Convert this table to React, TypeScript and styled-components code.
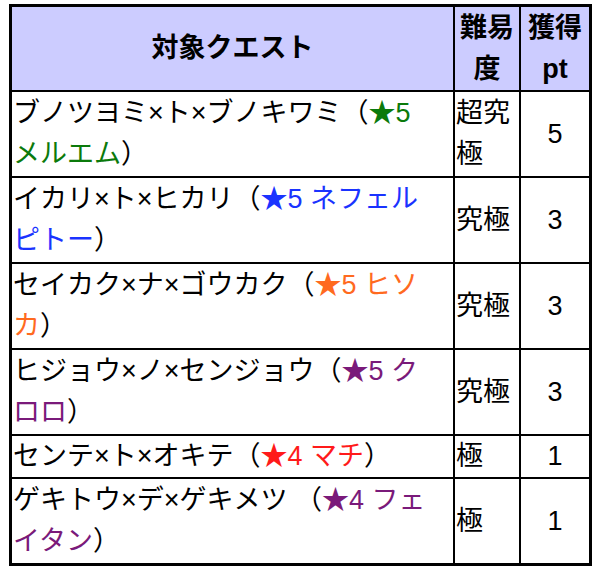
import React from "react";
import styled, { createGlobalStyle } from "styled-components";

const Global = createGlobalStyle`
  html, body { margin: 0; padding: 0; background: #ffffff; }
  body {
    font-family: "Liberation Sans", "Noto Sans CJK JP", sans-serif;
    color: #000;
  }
`;

const Page = styled.div`
  padding: 4px 0 0 9px;
`;

const Table = styled.table`
  width: 580px;
  box-sizing: border-box;
  table-layout: fixed;
  border-collapse: separate;
  border-spacing: 0;
  border: 3px solid #000;
  font-size: 27px;
  line-height: 41px;
`;

const Head = styled.th<{ $first?: boolean; $w: number }>`
  box-sizing: border-box;
  width: ${(p) => p.$w}px;
  height: 83px;
  background: #ccccff;
  font-weight: bold;
  text-align: center;
  vertical-align: middle;
  padding: 0;
  border-left: ${(p) => (p.$first ? "0" : "2px solid #000")};
`;

const Cell = styled.td<{ $first?: boolean; $center?: boolean; $tall?: boolean }>`
  box-sizing: border-box;
  height: ${(p) => (p.$tall ? 86 : 43)}px;
  border-top: 2px solid #000;
  border-left: ${(p) => (p.$first ? "0" : "2px solid #000")};
  padding: 0 1px;
  text-align: ${(p) => (p.$center ? "center" : "left")};
  vertical-align: middle;
  word-break: break-all;
`;

const Chara = styled.span<{ $color: string }>`
  color: ${(p) => p.$color};
`;

type Row = {
  first: string;
  star: string;
  color: string;
  line1: string;
  line2?: string;
  diff: React.ReactNode;
  pt: string;
  tall: boolean;
};

const rows: Row[] = [
  { first: "ブノツヨミ×ト×ブノキワミ（", star: "★5", color: "#0b7a0b", line1: "", line2: "メルエム", diff: <>超究<br />極</>, pt: "5", tall: true },
  { first: "イカリ×ト×ヒカリ（", star: "★5", color: "#1a33ff", line1: " ネフェル", line2: "ピトー", diff: "究極", pt: "3", tall: true },
  { first: "セイカク×ナ×ゴウカク（", star: "★5", color: "#ff6a1f", line1: " ヒソ", line2: "カ", diff: "究極", pt: "3", tall: true },
  { first: "ヒジョウ×ノ×センジョウ（", star: "★5", color: "#7a1a7a", line1: " ク", line2: "ロロ", diff: "究極", pt: "3", tall: true },
  { first: "センテ×ト×オキテ（", star: "★4", color: "#ff1a1a", line1: " マチ", diff: "極", pt: "1", tall: false },
  { first: "ゲキトウ×デ×ゲキメツ （", star: "★4", color: "#7a1a7a", line1: " フェ", line2: "イタン", diff: "極", pt: "1", tall: true },
];

export default function App() {
  return (
    <>
      <Global />
      <Page>
        <Table>
          <thead>
            <tr>
              <Head $first $w={441}>対象クエスト</Head>
              <Head $w={66}>難易<br />度</Head>
              <Head $w={70}>獲得<br />pt</Head>
            </tr>
          </thead>
          <tbody>
            {rows.map((r, i) => (
              <tr key={i}>
                <Cell $first $tall={r.tall}>
                  {r.first}
                  <Chara $color={r.color}>
                    {r.star}
                    {r.line1}
                  </Chara>
                  {r.line2 !== undefined ? (
                    <>
                      <br />
                      <Chara $color={r.color}>{r.line2}</Chara>）
                    </>
                  ) : (
                    "）"
                  )}
                </Cell>
                <Cell $tall={r.tall}>{r.diff}</Cell>
                <Cell $center $tall={r.tall}>{r.pt}</Cell>
              </tr>
            ))}
          </tbody>
        </Table>
      </Page>
    </>
  );
}
